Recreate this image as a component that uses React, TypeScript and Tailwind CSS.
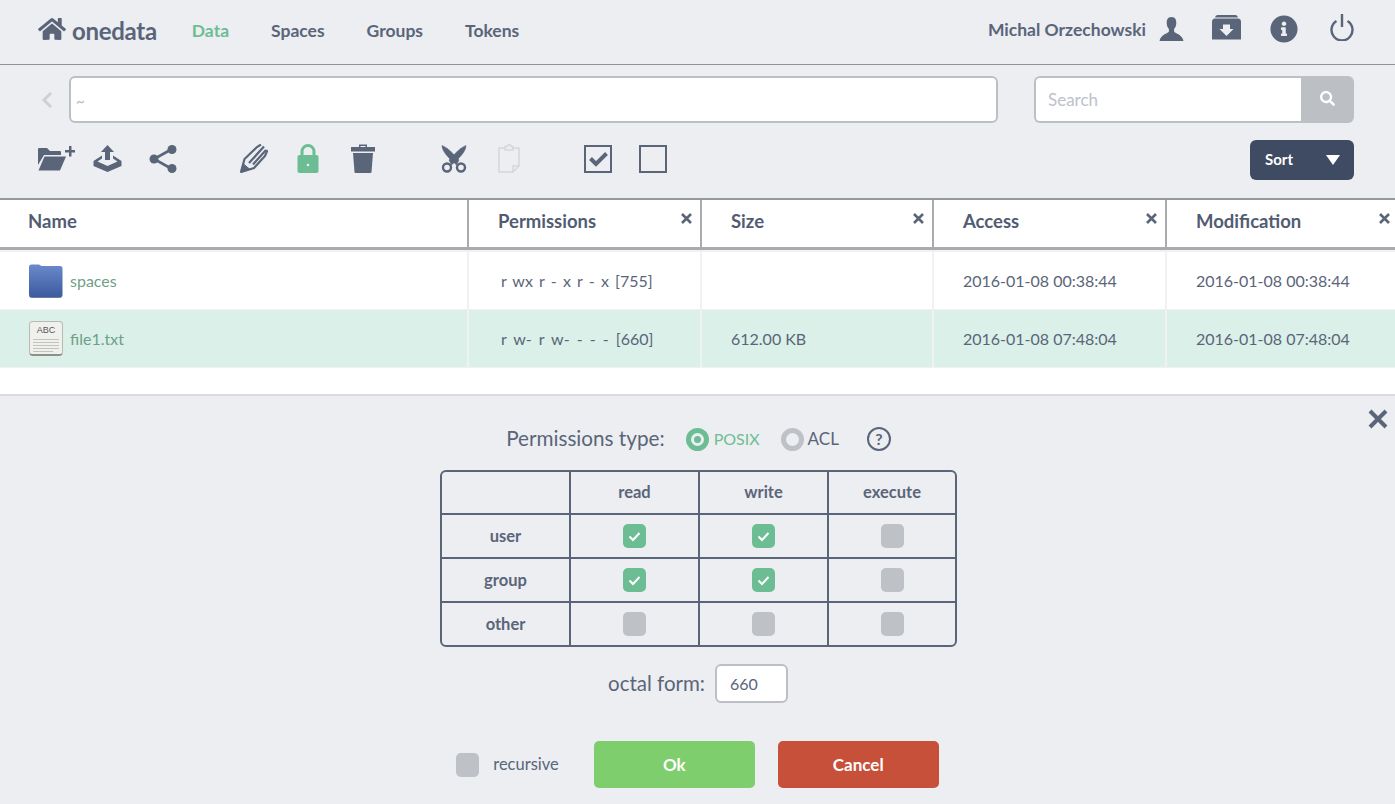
import { FaHome, FaInfoCircle, FaSearch } from "react-icons/fa";

const slate = "#5a6579";

const FolderPlus = () => (
  <svg width="37" height="26" viewBox="0 0 37 26" fill="#5a6579">
    <path d="M0 3 Q0 2 1 2 H9 L12 5 H22 Q23 5 23 6 V9 H6 L0 19 Z" />
    <path d="M6.500 10.500 H28 L22 24.500 H0.500 Z" />
    <path d="M27 4 H31 V0 H33.500 V4 H37 V6.500 H33.500 V10.500 H31 V6.500 H27 Z" />
  </svg>
);

const UploadBox = () => (
  <svg width="29" height="27" viewBox="0 0 29 27" fill="#5a6579">
    <path d="M14.500 0 L21 7 H17 V15 H12 V7 H8 Z" />
    <path d="M9 10.500 L0.500 16 V21 L14.500 27 L28.500 21 V16 L20 10.500 V13.500 L24.500 16.500 L14.500 21 L4.500 16.500 L9 13.500 Z" />
  </svg>
);

const Share = () => (
  <svg width="28" height="28" viewBox="0 0 28 28" fill="#5a6579" stroke="#5a6579">
    <path d="M23 4 L5 14 L23 24" fill="none" strokeWidth="2.600" />
    <circle cx="5" cy="14" r="4.500" stroke="none" />
    <circle cx="23" cy="4.500" r="4.500" stroke="none" />
    <circle cx="23" cy="23.500" r="4.500" stroke="none" />
  </svg>
);

const Quill = () => (
  <svg width="28" height="29" viewBox="0 0 28 29" fill="none" stroke="#5a6579">
    <path d="M1 28 L4.500 15 L17 3 L21 0.500" strokeWidth="2.200" />
    <path d="M1 28 L14 24 L25 12 L27.500 6" strokeWidth="2.200" />
    <path d="M0.500 28.500 L4 20.500 L9.500 25 Z" fill="#5a6579" strokeWidth="1" />
    <path d="M9 19 L24 2.500 M13 20.500 L26 6" strokeWidth="2.200" />
  </svg>
);

const Lock = () => (
  <svg width="22" height="29" viewBox="0 0 22 29">
    <path d="M5 12 V7.500 A6 6 0 0 1 17 7.500 V12" fill="none" stroke="#6dbd94" strokeWidth="3" />
    <rect x="0.500" y="11" width="21" height="18" rx="2" fill="#6dbd94" />
    <circle cx="11" cy="21" r="1.300" fill="#eceef2" />
  </svg>
);

const Trash = () => (
  <svg width="24" height="29" viewBox="0 0 24 29" fill="#5a6579">
    <path d="M8 3 V0.500 H16 V3 H14.500 V2 H9.500 V3 Z" />
    <rect x="0" y="3" width="24" height="4.500" />
    <path d="M2 9 H22 L20.500 28 Q20.400 29 19.500 29 H4.500 Q3.600 29 3.500 28 Z" />
  </svg>
);

const Scissors = () => (
  <svg width="26" height="28" viewBox="0 0 26 28" fill="none" stroke="#5a6579">
    <circle cx="6" cy="22.500" r="4" strokeWidth="2.400" />
    <circle cx="20" cy="22.500" r="4" strokeWidth="2.400" />
    <path d="M1 0.500 C5 2 10 6 18 15 L15.500 20 L9 14 C5 10 1 5 1 0.500 Z" fill="#5a6579" strokeWidth="0.500" />
    <path d="M25 0.500 C21 2 16 6 8 15 L10.500 20 L17 14 C21 10 25 5 25 0.500 Z" fill="#5a6579" strokeWidth="0.500" />
  </svg>
);

const Paste = () => (
  <svg width="22" height="29" viewBox="0 0 22 29" fill="none" stroke="#d5d6d8" strokeWidth="1.500">
    <path d="M7 4 H1 V28 H15 L21 22 V4 H15" />
    <path d="M15 28 V22 H21" />
    <path d="M7 6 V2.500 H9 Q9 0.800 11 0.800 Q13 0.800 13 2.500 H15 V6 Z" />
  </svg>
);

const CheckedBox = () => (
  <svg width="28" height="28" viewBox="0 0 28 28" fill="none" stroke="#5a6579">
    <rect x="1" y="1" width="26" height="26" strokeWidth="2" />
    <path d="M6.500 13.500 L12 19 L22.500 8.500" strokeWidth="4" />
  </svg>
);

const EmptyBox = () => (
  <svg width="28" height="28" viewBox="0 0 28 28" fill="none" stroke="#5a6579">
    <rect x="1" y="1" width="26" height="26" strokeWidth="2" />
  </svg>
);

const UserIcon = () => (
  <svg width="25" height="24" viewBox="0 0 25 25" fill="#5a6579">
    <path d="M12.500 0 C8.500 0 7.500 3 7.500 6 C7.500 9 8.500 11 9.800 12.500 V15 C9.800 16.500 1 18 0 25 H25 C24 18 15.200 16.500 15.200 15 V12.500 C16.500 11 17.500 9 17.500 6 C17.500 3 16.500 0 12.500 0 Z" />
  </svg>
);

const Archive = () => (
  <svg width="29" height="25" viewBox="0 0 29 25">
    <path d="M3 2.500 Q3.300 0 5.500 0 H23.500 Q25.700 0 26 2.500 Z" fill="#5a6579" />
    <path d="M0 7 Q0 3.500 3 3.500 H26 Q29 3.500 29 7 V24.500 H0 Z" fill="#5a6579" />
    <path d="M11 9.500 H18 V14 H21.500 L14.500 21 L7.500 14 H11 Z" fill="#eceef2" />
  </svg>
);

const Power = () => (
  <svg width="26" height="28" viewBox="0 0 26 28" fill="none" stroke="#5a6579" strokeWidth="2.400">
    <path d="M7.500 8 A10.500 10.500 0 1 0 18.500 8" />
    <path d="M13 1 V14" />
  </svg>
);

const SmallX = () => (
  <svg width="11" height="11" viewBox="0 0 11 11" stroke="#5a6579" strokeWidth="2.600" className="shrink-0 mt-[6px]">
    <path d="M1 1 L10 10 M10 1 L1 10" />
  </svg>
);

const FolderFile = () => (
  <svg width="34" height="34" viewBox="0 0 34 34" className="shrink-0">
    <defs>
      <linearGradient id="fld" x1="0" y1="0" x2="0" y2="1">
        <stop offset="0" stopColor="#6a8acb" />
        <stop offset="1" stopColor="#3c5a9f" />
      </linearGradient>
    </defs>
    <path d="M0 3 Q0 0.500 2.500 0.500 H10 L12.500 2 H31 Q33.500 2 33.500 4.500 V30 Q33.500 33.500 30 33.500 H3.500 Q0 33.500 0 30 Z" fill="url(#fld)" />
    <path d="M0 31 Q0.500 33.500 3.500 33.500 H30 Q33 33.500 33.500 31 L33.500 32 Q33 34 30 34 H3.500 Q0.500 34 0 32 Z" fill="#3b4a6b" />
  </svg>
);

const TextFile = () => (
  <div className="w-[34px] h-[35px] shrink-0 rounded-[4px] border border-[#b9b9b6] border-b-2 border-b-[#8f8f8c] bg-[#f0f0ec] flex flex-col items-center pt-[3px]">
    <span className="text-[9px] leading-[11px] text-[#55585c] font-['Liberation_Sans',sans-serif]">ABC</span>
    <div className="mt-[3px] w-[26px] flex flex-col gap-[2px]">
      <div className="h-px bg-[#c2c2be]" />
      <div className="h-px bg-[#c2c2be]" />
      <div className="h-px bg-[#c2c2be]" />
      <div className="h-px bg-[#c2c2be]" />
      <div className="h-px w-[20px] bg-[#c2c2be]" />
    </div>
  </div>
);

const Check = () => (
  <div className="w-[23px] h-[24px] rounded-[5px] bg-[#6dbd94] flex items-center justify-center">
    <svg width="13" height="11" viewBox="0 0 13 11" fill="none" stroke="#fff" strokeWidth="2">
      <path d="M1.500 5.500 L5 9 L11.500 2" />
    </svg>
  </div>
);

const Off = () => <div className="w-[23px] h-[24px] rounded-[5px] bg-[#bec1c5]" />;

const columns = ["Permissions", "Size", "Access", "Modification"];
const gridCols = "grid-cols-[467px_233px_232px_233px_230px]";

function HeaderCell({ label }: { label: string }) {
  return (
    <div className="h-full border-l-2 border-[#a9abaf] flex justify-between pl-[29px] pr-[8px] last:pr-[5px] pt-[7px] text-[18.5px] leading-[28px] font-bold text-[#515c72]">
      <span>{label}</span>
      <SmallX />
    </div>
  );
}

function Row({ name, icon, perm, permSpacing, size, date, selected }: { name: string; icon: React.ReactNode; perm: string; permSpacing: string; size: string; date: string; selected?: boolean }) {
  const bg = selected ? "bg-[#daf0e8]" : "bg-white";
  const cell = "flex items-center border-l-2 border-[#f0f1f3] pl-[29px] text-[16px] text-[#5a6579]";
  return (
    <div className={`grid ${gridCols} ${bg} h-[57px]`}>
      <div className="flex items-center pl-[29px] gap-[7px] text-[16px] text-[#6f9f88]">
        {icon}
        <span>{name}</span>
      </div>
      <div className={`${cell} pl-[32px] ${permSpacing} whitespace-pre`}>{perm}</div>
      <div className={cell}>{size}</div>
      <div className={cell}>{date}</div>
      <div className={cell}>{date}</div>
    </div>
  );
}

const th = "flex items-center justify-center text-[16.5px] font-bold text-[#5a6579] border-[#5a6579]";
const cellBase = "flex items-center justify-center border-[#5a6579]";

export default function App() {
  return (
    <div className="w-[1395px] h-[804px] overflow-hidden bg-[#eceef2] font-[Lato,sans-serif] text-[#5a6579]">
      {/* top bar */}
      <header className="h-[65px] border-b border-[#8e9095] flex items-center pl-[38px] pr-[40px]">
        <div className="flex items-center pb-[6px]">
          <FaHome size={28} color={slate} />
          <span className="ml-[6px] mt-[3px] text-[24px] font-bold leading-[30px] tracking-[-0.3px]">onedata</span>
        </div>
        <nav className="ml-[35px] flex gap-[42px] text-[17.5px] font-bold pb-[2px]">
          <span className="text-[#6dbd94]">Data</span>
          <span>Spaces</span>
          <span>Groups</span>
          <span>Tokens</span>
        </nav>
        <div className="ml-auto flex items-center pb-[6px]">
          <span className="text-[17.5px] font-bold mt-[2px]">Michal Orzechowski</span>
          <div className="ml-[13px]"><UserIcon /></div>
          <div className="ml-[28px] mb-[3px]"><Archive /></div>
          <div className="ml-[29px]"><FaInfoCircle size={28} color={slate} /></div>
          <div className="ml-[31px] mb-[4px]"><Power /></div>
        </div>
      </header>

      {/* path + search + tools */}
      <section className="h-[135px] border-b-2 border-[#98999d] px-[38px] pt-[11px]">
        <div className="flex items-center">
          <svg width="12" height="18" viewBox="0 0 12 18" fill="none" stroke="#cfd0d3" strokeWidth="3" className="ml-[3px]">
            <path d="M10 2 L3 9 L10 16" />
          </svg>
          <div className="ml-[16px] w-[929px] h-[47px] bg-white border-2 border-[#bcbfc4] rounded-[6px] flex items-center pl-[5px] pt-[3px] text-[15px] text-[#b5b8bd]">~</div>
          <div className="ml-[36px] flex h-[47px] w-[320px]">
            <div className="flex-1 bg-white border-2 border-r-0 border-[#bcbfc4] rounded-l-[6px] flex items-center pl-[12px] text-[17px] text-[#bdc2cb]">Search</div>
            <div className="w-[53px] bg-[#bcbfc4] rounded-r-[6px] flex items-center justify-center pb-[2px]">
              <FaSearch size={15} color="#fff" />
            </div>
          </div>
        </div>
        <div className="mt-[14px] flex items-center">
          <FolderPlus />
          <div className="ml-[18px]"><UploadBox /></div>
          <div className="ml-[27px]"><Share /></div>
          <div className="ml-[63px]"><Quill /></div>
          <div className="ml-[29px]"><Lock /></div>
          <div className="ml-[32px]"><Trash /></div>
          <div className="ml-[66px]"><Scissors /></div>
          <div className="ml-[31px]"><Paste /></div>
          <div className="ml-[64px]"><CheckedBox /></div>
          <div className="ml-[27px]"><EmptyBox /></div>
          <div className="ml-auto mr-[3px] mt-[3px] w-[104px] h-[40px] rounded-[6px] bg-[#3e4b62] flex items-center justify-between pl-[15px] pr-[14px] text-[15px] font-bold text-white">
            <span className="pb-[2px]">Sort</span>
            <svg width="14" height="10" viewBox="0 0 14 10" fill="#fff"><path d="M0 0 H14 L7 10 Z" /></svg>
          </div>
        </div>
      </section>

      {/* file table */}
      <section className="bg-white h-[196px] border-b-2 border-[#d9dbdf]">
        <div className={`grid ${gridCols} h-[50px] border-b-[3px] border-[#a9abaf]`}>
          <div className="pl-[28px] pt-[7px] text-[18.5px] leading-[28px] font-bold text-[#515c72]">Name</div>
          {columns.map((c) => (
            <HeaderCell key={c} label={c} />
          ))}
        </div>
        <div className="h-[2px] bg-[#f0f1f3]" />
        <Row name="spaces" icon={<FolderFile />} perm="r wx r - x r - x [755]" permSpacing="[word-spacing:2.100px]" size="" date="2016-01-08 00:38:44" />
        <div className="h-px bg-[#f0f1f3]" />
        <Row name="file1.txt" icon={<TextFile />} perm="r w- r w- - - - [660]" permSpacing="[word-spacing:3px]" size="612.00 KB" date="2016-01-08 07:48:04" selected />
        <div className="h-px bg-[#f0f1f3]" />
      </section>

      {/* permissions panel */}
      <section className="relative flex flex-col items-center">
        <svg width="20" height="20" viewBox="0 0 20 20" stroke={slate} strokeWidth="4" className="absolute right-[7px] top-[13px]">
          <path d="M2 2 L18 18 M18 2 L2 18" />
        </svg>
        <div className="mt-[27px] ml-[2px] h-[32px] flex items-center">
          <span className="text-[20.7px]">Permissions type:</span>
          <div className="ml-[21px] w-[23px] h-[23px] rounded-full border-[5px] border-[#6dbd94] flex items-center justify-center">
            <div className="w-[7px] h-[7px] rounded-full bg-[#6dbd94]" />
          </div>
          <span className="ml-[5px] text-[16px] text-[#6dbd94]">POSIX</span>
          <div className="ml-[21px] w-[23px] h-[23px] rounded-full border-[5px] border-[#bec1c5]" />
          <span className="ml-[4px] text-[17px]">ACL</span>
          <div className="ml-[28px] w-[24px] h-[24px] rounded-full border-2 border-[#5a6579] flex items-center justify-center text-[16px] font-bold leading-none">?</div>
        </div>

        <div className="mt-[15px] w-[517px] h-[177px] border-2 border-[#5a6579] rounded-[6px] grid grid-cols-[129px_129px_129px_126px] grid-rows-[43px_44px_44px_42px] ml-[2px]">
          <div className={`${th} border-r-2 border-b-2`} />
          <div className={`${th} border-r-2 border-b-2`}>read</div>
          <div className={`${th} border-r-2 border-b-2`}>write</div>
          <div className={`${th} border-b-2`}>execute</div>

          <div className={`${th} border-r-2 border-b-2`}>user</div>
          <div className={`${cellBase} border-r-2 border-b-2`}><Check /></div>
          <div className={`${cellBase} border-r-2 border-b-2`}><Check /></div>
          <div className={`${cellBase} border-b-2`}><Off /></div>

          <div className={`${th} border-r-2 border-b-2`}>group</div>
          <div className={`${cellBase} border-r-2 border-b-2`}><Check /></div>
          <div className={`${cellBase} border-r-2 border-b-2`}><Check /></div>
          <div className={`${cellBase} border-b-2`}><Off /></div>

          <div className={`${th} border-r-2`}>other</div>
          <div className={`${cellBase} border-r-2`}><Off /></div>
          <div className={`${cellBase} border-r-2`}><Off /></div>
          <div className={cellBase}><Off /></div>
        </div>

        <div className="mt-[17px] ml-[1px] flex items-center">
          <span className="text-[20.5px]">octal form:</span>
          <div className="ml-[10px] w-[73px] h-[39px] bg-white border-2 border-[#bcbfc4] rounded-[6px] flex items-center pl-[13px] text-[16px]">660</div>
        </div>

        <div className="mt-[38px] flex items-center">
          <Off />
          <span className="ml-[14px] text-[16.5px]">recursive</span>
          <div className="ml-[35px] w-[161px] h-[47px] rounded-[5px] bg-[#7fce6d] flex items-center justify-center text-[17px] font-bold text-white">Ok</div>
          <div className="ml-[23px] w-[161px] h-[47px] rounded-[5px] bg-[#c7503a] flex items-center justify-center text-[17px] font-bold text-white">Cancel</div>
        </div>
      </section>
    </div>
  );
}
